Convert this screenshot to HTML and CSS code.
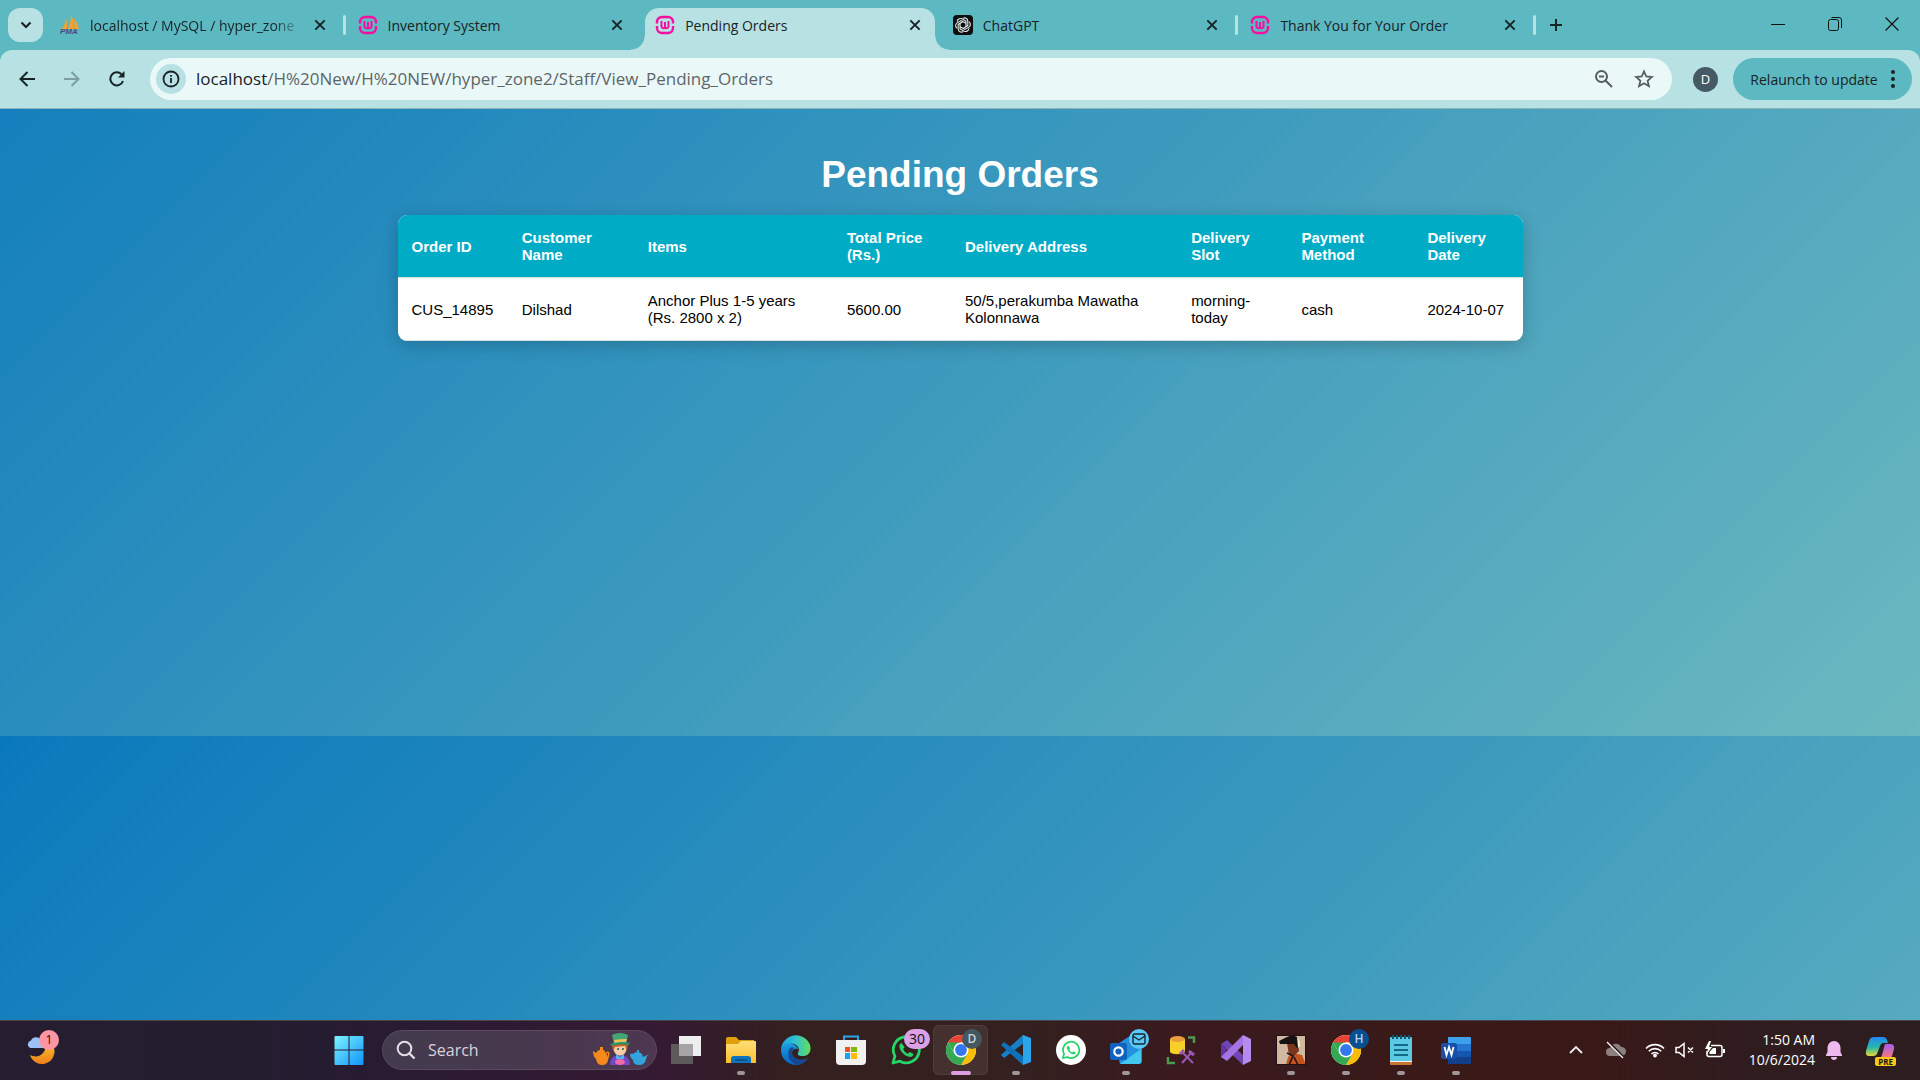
FILE: index.html
```html
<!DOCTYPE html>
<html lang="en">
<head>
<meta charset="utf-8">
<title>Pending Orders</title>
<link rel="stylesheet" href="styles.css">
</head>
<body>
<svg class="defs" aria-hidden="true">
  <defs>
    <linearGradient id="winGrad" x1="0" y1="0" x2="1" y2="1"><stop offset="0" stop-color="#7df3ff"/><stop offset="1" stop-color="#0f93fb"/></linearGradient>
    <linearGradient id="moonGrad" x1="0" y1="0" x2="0" y2="1"><stop offset="0" stop-color="#f5b52a"/><stop offset="1" stop-color="#f0801a"/></linearGradient>
    <linearGradient id="folderGrad" x1="0" y1="0" x2="0" y2="1"><stop offset="0" stop-color="#ffe07a"/><stop offset="1" stop-color="#fdbf2c"/></linearGradient>
    <linearGradient id="edgeTop" x1="0" y1="0" x2="1" y2="0"><stop offset="0" stop-color="#1f9fe0"/><stop offset=".5" stop-color="#2fc3d0"/><stop offset="1" stop-color="#66dd55"/></linearGradient>
    <linearGradient id="edgeSide" x1="0" y1="0" x2="0" y2="1"><stop offset="0" stop-color="#1b9de2"/><stop offset="1" stop-color="#0c5fc0"/></linearGradient>
    <linearGradient id="copA" x1="0" y1="0" x2="0" y2="1"><stop offset="0" stop-color="#1f86f5"/><stop offset=".55" stop-color="#28b9a8"/><stop offset="1" stop-color="#e8d838"/></linearGradient>
    <linearGradient id="copB" x1="0" y1="0" x2="0" y2="1"><stop offset="0" stop-color="#a25cf0"/><stop offset="1" stop-color="#ff7a70"/></linearGradient>
    <symbol id="wamp" viewBox="0 0 20 20">
      <g fill="none" stroke="#f70fa1" stroke-width="2.4"><path d="M2 8.500V7a5 5 0 0 1 5-5h6a5 5 0 0 1 5 5v1.500M2 11v2a5 5 0 0 0 5 5h6a5 5 0 0 0 5-5v-2"/><path d="M6.500 6v5.500a2 2 0 0 0 3.500 1 2 2 0 0 0 3.500-1V6M10 7v6" stroke-width="2"/></g>
    </symbol>
    <symbol id="cross" viewBox="0 0 12 12"><path d="M2 2l8 8M10 2l-8 8" fill="none" stroke="#182326" stroke-width="1.700"/></symbol>
    <symbol id="chrome" viewBox="0 0 32 32">
      <circle cx="16" cy="16" r="15" fill="#fff"/>
      <path d="M16 16 3 8.500A15 15 0 0 1 29 8.500H16z" fill="#ea4335"/>
      <path d="M29 8.500A15 15 0 0 1 16 31l6.500-11.250L16 8.500z" fill="#fbbc05"/>
      <path d="M3 8.500A15 15 0 0 0 16 31l6.500-11.250H9.500z" fill="#34a853"/>
      <path d="M3 8.500 9.500 19.750 16 16V8.500z" fill="#34a853"/>
      <circle cx="16" cy="16" r="7.500" fill="#fff"/><circle cx="16" cy="16" r="5.900" fill="#3478f0"/>
    </symbol>
    <symbol id="phone" viewBox="0 0 32 32">
      <path d="M3 29l1.900-6.900A13 13 0 1 1 10 27.200z" fill="none" stroke="currentColor" stroke-width="2.800" stroke-linejoin="round"/>
      <path d="M11.500 9c-1.500.3-2.500 2-2 4.200 1 4.500 5 8.600 9.500 9.600 2.300.4 4.400-.7 4.400-2.900l-3.700-2-1.700 1.900c-2.200-.9-3.900-2.600-4.900-4.800l1.600-1.700z" fill="currentColor"/>
    </symbol>
  </defs>
</svg>

<header class="browser">
  <div class="tabstrip">
    <button class="tabsearch" aria-label="Search tabs"><svg width="12" height="8" viewBox="0 0 12 8"><path d="M1.500 1.500 6 6l4.500-4.500" fill="none" stroke="#182326" stroke-width="2.200"/></svg></button>
    <nav class="tabs" aria-label="Tabs">
      <div class="tab">
        <svg class="favicon" viewBox="0 0 20 20"><path d="M1 14Q5 11 6 3q2 5 1 11zM8 14Q11 8 11 0q4 7 2 14zM14 14q1-5 0-11 4 5 5 11z" fill="#f6a12c"/><text x="0" y="19" class="pma">PMA</text></svg>
        <a href="#" class="title fade">localhost / MySQL / hyper_zone</a>
        <button class="close" aria-label="Close tab"><svg width="14" height="14"><use href="#cross"/></svg></button>
      </div>
      <div class="tab divided">
        <svg class="favicon"><use href="#wamp"/></svg>
        <a href="#" class="title">Inventory System</a>
        <button class="close" aria-label="Close tab"><svg width="14" height="14"><use href="#cross"/></svg></button>
      </div>
      <div class="tab active">
        <svg class="favicon"><use href="#wamp"/></svg>
        <a href="#" class="title">Pending Orders</a>
        <button class="close" aria-label="Close tab"><svg width="14" height="14"><use href="#cross"/></svg></button>
      </div>
      <div class="tab">
        <svg class="favicon" viewBox="0 0 20 20"><rect width="20" height="20" rx="4" fill="#0b0d0e"/><g fill="none" stroke="#e8eeee" stroke-width="1.100"><path id="petal" d="M10 3.200c2-1 4.600.2 4.800 2.800v4.600L10 13.400"/><use href="#petal" transform="rotate(60 10 10)"/><use href="#petal" transform="rotate(120 10 10)"/><use href="#petal" transform="rotate(180 10 10)"/><use href="#petal" transform="rotate(240 10 10)"/><use href="#petal" transform="rotate(300 10 10)"/></g></svg>
        <a href="#" class="title">ChatGPT</a>
        <button class="close" aria-label="Close tab"><svg width="14" height="14"><use href="#cross"/></svg></button>
      </div>
      <div class="tab divided last">
        <svg class="favicon"><use href="#wamp"/></svg>
        <a href="#" class="title">Thank You for Your Order</a>
        <button class="close" aria-label="Close tab"><svg width="14" height="14"><use href="#cross"/></svg></button>
      </div>
    </nav>
    <button class="newtab" aria-label="New tab"><svg width="14" height="14" viewBox="0 0 14 14"><path d="M7 1v12M1 7h12" stroke="#182326" stroke-width="2"/></svg></button>
    <div class="wincontrols">
      <button aria-label="Minimize"><svg width="14" height="14" viewBox="0 0 14 14"><path d="M0 7.500h14" stroke="#111"/></svg></button>
      <button aria-label="Restore"><svg width="14" height="14" viewBox="0 0 14 14"><g fill="none" stroke="#111"><rect x=".5" y="2.500" width="10" height="11" rx="2"/><path d="M3.500.5H11a2.500 2.500 0 0 1 2.500 2.500v8"/></g></svg></button>
      <button aria-label="Close"><svg width="14" height="14" viewBox="0 0 14 14"><path d="M.5.5l13 13M13.500.5l-13 13" stroke="#111" stroke-width="1.200"/></svg></button>
    </div>
  </div>
  <div class="toolbar">
    <div class="navbuttons">
      <button aria-label="Back"><svg width="16" height="16" viewBox="0 0 16 16"><path d="M16 8H1.500M8.500 1 1.500 8l7 7" fill="none" stroke="#182326" stroke-width="2"/></svg></button>
      <button aria-label="Forward"><svg width="16" height="16" viewBox="0 0 16 16"><path d="M0 8h14.500M7.500 1l7 7-7 7" fill="none" stroke="#7d9ea1" stroke-width="2"/></svg></button>
      <button aria-label="Reload"><svg width="16" height="16" viewBox="0 0 16 16"><path d="M14 10A6.500 6.500 0 1 1 12.600 3.400L14 5" fill="none" stroke="#182326" stroke-width="2"/><path d="M15.500 0v6.500H9z" fill="#182326"/></svg></button>
    </div>
    <div class="omnibox">
      <button class="siteinfo" aria-label="Site information"><svg width="18" height="18" viewBox="0 0 18 18"><circle cx="9" cy="9" r="7.500" fill="none" stroke="#182326" stroke-width="1.800"/><path d="M9 8v5M9 5v1.800" stroke="#182326" stroke-width="1.800"/></svg></button>
      <div class="url"><span class="host">localhost</span>/H%20New/H%20NEW/hyper_zone2/Staff/View_Pending_Orders</div>
      <button class="omniicon" aria-label="Zoom"><svg width="20" height="20" viewBox="0 0 20 20"><g fill="none" stroke="#555e60" stroke-width="2"><circle cx="7.500" cy="7.500" r="5.500"/><path d="M11.500 11.500l6.500 6.500M5 7.500h5"/></g></svg></button>
      <button class="omniicon" aria-label="Bookmark"><svg width="20" height="20" viewBox="0 0 20 20"><path d="M10 2.400l2.300 5.100 5.500.5-4.200 3.700 1.300 5.500-4.900-2.900-4.900 2.900 1.300-5.500L2.200 8l5.500-.5z" fill="none" stroke="#555e60" stroke-width="1.800"/></svg></button>
    </div>
    <button class="avatar" aria-label="Profile">D</button>
    <button class="relaunch">Relaunch to update<svg width="4" height="18" viewBox="0 0 4 18"><g fill="#182326"><circle cx="2" cy="2" r="2"/><circle cx="2" cy="9" r="2"/><circle cx="2" cy="16" r="2"/></g></svg></button>
  </div>
</header>

<main class="page">
  <h1>Pending Orders</h1>
  <table class="orders">
    <colgroup><col class="c-id"><col class="c-name"><col class="c-items"><col class="c-total"><col class="c-addr"><col class="c-slot"><col class="c-pay"><col class="c-date"></colgroup>
    <thead><tr><th>Order ID</th><th>Customer Name</th><th>Items</th><th>Total Price (Rs.)</th><th>Delivery Address</th><th>Delivery Slot</th><th>Payment Method</th><th>Delivery Date</th></tr></thead>
    <tbody><tr><td>CUS_14895</td><td>Dilshad</td><td>Anchor Plus 1-5 years (Rs. 2800 x 2)</td><td>5600.00</td><td>50/5,perakumba Mawatha Kolonnawa</td><td>morning-today</td><td>cash</td><td>2024-10-07</td></tr></tbody>
  </table>
</main>

<footer class="taskbar">
  <button class="weather" aria-label="Weather">
    <svg width="30" height="30" viewBox="0 0 30 30"><path d="M28 13A12.500 12.500 0 0 1 4 20c8 4 15-1 16-9z" fill="url(#moonGrad)"/><path d="M4 13a4 4 0 0 1 1-7.500 5.500 5.500 0 0 1 10 0A4 4 0 0 1 18 13z" fill="#9cc0f5"/></svg>
    <span class="badge pink">1</span>
  </button>
  <div class="apps">
    <button class="app" aria-label="Start"><svg width="30" height="30" viewBox="0 0 30 30"><path d="M1.500 1h13v13.500h-14V2a1 1 0 0 1 1-1zM15.500 1h13a1 1 0 0 1 1 1v12.500h-14zM.5 15.500h14V30h-13a1 1 0 0 1-1-1zM15.500 15.500h14V29a1 1 0 0 1-1 1h-13z" fill="url(#winGrad)"/></svg></button>
    <label class="search">
      <svg width="20" height="20" viewBox="0 0 20 20"><circle cx="8.500" cy="8.500" r="6.800" fill="none" stroke="#e4dee6" stroke-width="2"/><path d="M13.500 13.500 18.500 18.500" stroke="#e4dee6" stroke-width="2.400"/></svg>
      <input type="text" placeholder="Search" aria-label="Search">
      <svg class="hatter" width="58" height="34" viewBox="0 0 58 34">
        <path d="M7 17h5l1 2q3 3 3 7 0 6-6 6-5 0-6-6-3-3-3-8l3 2q1-2 3-3z" fill="#f58a1c"/><path d="M8 14h3v3H8z" fill="#f58a1c"/><path d="M14 20q5-3 1 7" fill="none" stroke="#f58a1c" stroke-width="1.500"/>
        <path d="M41 21q4-4 9 0l1 3 6-3q-3 2-3 5-1 6-7 6t-6-5q-3-2-3-6 3-1 3 0zM45 17h2v3h-2z" fill="#33a3dd"/>
        <path d="M18 32q0-10 10-10t10 10z" fill="#7546c8"/><path d="M24 21l4 3 4-3v5H24z" fill="#4fb3ee"/>
        <circle cx="28" cy="16" r="6.500" fill="#f8cda6"/><path d="M21 18l-1-7 16-1-1 8-2-5-10 1z" fill="#c6652b"/><path d="M18 11q10-5 20-1l-1 2q-9-2-18 1z" fill="#2a8d66"/><path d="M20 2q8-4 16 0l-2 8q-6-1-12 1z" fill="#43a676"/><path d="M22 7q6-1 13-1l-1 3q-6-1-11 1z" fill="#f2c257"/><circle cx="26" cy="16" r="1" fill="#24565f"/><circle cx="31" cy="16" r="1" fill="#24565f"/><ellipse cx="28" cy="29" rx="5" ry="3" fill="#f06aa7"/>
      </svg>
    </label>
    <button class="app" aria-label="Task view"><svg width="30" height="30" viewBox="0 0 30 30"><rect x="8" y="1" width="22" height="20" fill="#eee"/><rect x="0" y="9" width="22" height="20" fill="#5d5a5c"/><rect x="8" y="9" width="14" height="12" fill="#a6a4a6"/></svg></button>
    <button class="app running" aria-label="File Explorer"><svg width="32" height="30" viewBox="0 0 32 30"><path d="M1 4a2 2 0 0 1 2-2h8l3 3h15v5H1z" fill="#dfa00b"/><path d="M1 9h12l3-3h14a1 1 0 0 1 1 1v21H1z" fill="url(#folderGrad)"/><path d="M6 28v-4a3 3 0 0 1 3-3h14a3 3 0 0 1 3 3v4z" fill="#0e73bd"/><path d="M10 25h12" stroke="#084c80" stroke-width="1.500"/></svg></button>
    <button class="app" aria-label="Edge"><svg width="32" height="32" viewBox="0 0 32 32"><path d="M1 16a15 15 0 0 1 29-5c2 7-2 11-7 11-4 0-6-1-5-3 3-5-2-10-8-9-5 1-8 4-9 6z" fill="url(#edgeTop)"/><path d="M1 16c1-5 6-8 11-6 4 1 6 4 6 6-1-2-5-2-6 2-1 6 7 11 16 6a15 15 0 0 1-13 7A15 15 0 0 1 1 16z" fill="url(#edgeSide)"/><path d="M10 14c-4 6-1 14 7 17 5 0 9-3 11-7-8 4-16 0-16-6 0-2 1-3 2-4-1-1-3-1-4 0z" fill="#15488f"/></svg></button>
    <button class="app" aria-label="Store"><svg width="30" height="30" viewBox="0 0 30 30"><path d="M8 6V1.500h14V6" fill="none" stroke="#2aa4e8" stroke-width="2"/><path d="M0 5h30v21a4 4 0 0 1-4 4H4a4 4 0 0 1-4-4z" fill="#f1f1f2"/><path d="M9 12h5v5H9z" fill="#f04e23"/><path d="M15 12h6v5h-6z" fill="#7eba02"/><path d="M9 18h5v6H9z" fill="#1ba1ee"/><path d="M15 18h6v6h-6z" fill="#ffb903"/></svg></button>
    <button class="app green" aria-label="WhatsApp"><svg width="32" height="32"><use href="#phone"/></svg><span class="badge lilac">30</span></button>
    <button class="app current" aria-label="Chrome, profile D"><svg width="32" height="32"><use href="#chrome"/></svg><span class="badge slate">D</span></button>
    <button class="app running" aria-label="Visual Studio Code"><svg width="32" height="32" viewBox="0 0 32 32"><path d="M23 1 1 21l3 3 20-15z" fill="#1481c9"/><path d="M1 11l3-3 20 15-1 8z" fill="#0f71b8"/><path d="M23 1l8 3v24l-8 3z" fill="#2da5ee"/></svg></button>
    <button class="app green" aria-label="WhatsApp Web"><svg width="32" height="32" viewBox="0 0 32 32"><circle cx="16" cy="16" r="15" fill="#fff"/><use href="#phone" x="6" y="6" width="20" height="20"/></svg></button>
    <button class="app running" aria-label="Outlook"><svg width="32" height="30" viewBox="0 0 32 30"><path d="M6 10 20 1l12 9v16a3 3 0 0 1-3 3H10z" fill="#2690dc"/><path d="M10 29l21-15v12a3 3 0 0 1-3 3z" fill="#42c8ef"/><rect y="8" width="17" height="17" rx="2" fill="#0f62bd"/><circle cx="8.500" cy="16.500" r="4.200" fill="none" stroke="#fff" stroke-width="2.200"/></svg><span class="badge sky"><svg width="14" height="12" viewBox="0 0 14 12"><g fill="none" stroke="#14262e" stroke-width="1.400"><rect x="1" y="1" width="12" height="10" rx="1.500"/><path d="M1 3l6 4 6-4"/></g></svg></span></button>
    <button class="app" aria-label="SQL Server tools"><svg width="30" height="30" viewBox="0 0 30 30"><path d="M4 4v13c2 3 12 3 15 0V4z" fill="#f6cf29"/><ellipse cx="11.500" cy="4" rx="7.500" ry="3" fill="#eb9d3f"/><path d="M22 2.500h6V8M2 22v6h7" fill="none" stroke="#4a9b4e" stroke-width="2.500"/><path d="M16 28l9-10M17 18l10 10" stroke="#9a57b5" stroke-width="2"/><path d="M14 19l4-4M23 16l5 4" stroke="#9a57b5" stroke-width="3"/></svg></button>
    <button class="app" aria-label="Visual Studio"><svg width="32" height="32" viewBox="0 0 32 32"><path d="M1 10l6-4 18 17-2 8z" fill="#7045b5"/><path d="M1 10l5 3v8l-5 3z" fill="#6236a0"/><path d="M1 23l6 4L25 9 23 1z" fill="#a474e4"/><path d="M23 1l8 4v22l-8 4z" fill="#b68bf0"/></svg></button>
    <button class="app running" aria-label="Game"><svg width="30" height="30" viewBox="0 0 30 30"><rect width="30" height="30" fill="#d1b8a3"/><path d="M10 30l2-8 5-4 9 2 4 10z" fill="#c4521b"/><path d="M11 8h11l1 8-5 5-5-1z" fill="#7b351b"/><path d="M3 6 9 3q7-4 12-1l2 6 1 4-3 1-3-4H4z" fill="#171112"/><path d="M21 2q4 4 3 10l-2 1z" fill="#efe6c4"/><path d="M11 18l6 3-4 9M18 22l4 8" fill="none" stroke="#1f1212" stroke-width="1.500"/><rect x=".5" y=".5" width="29" height="29" fill="none" stroke="#221312"/></svg></button>
    <button class="app running" aria-label="Chrome, profile H"><svg width="32" height="32"><use href="#chrome"/></svg><span class="badge navy">H</span></button>
    <button class="app running" aria-label="Notepad"><svg width="24" height="30" viewBox="0 0 24 30"><rect x="1" y="22" width="22" height="8" rx="1" fill="#c9752d"/><rect x="1" y="22" width="22" height="5" fill="#f2f2f2"/><rect x="1" y="2" width="22" height="24" rx="1" fill="#5cc9e4"/><path d="M5 10h14M5 15h14M5 20h14" stroke="#126983" stroke-width="2"/><path d="M4 0v4M8 0v4M12 0v4M16 0v4M20 0v4" stroke="#0f5873" stroke-width="2"/></svg></button>
    <button class="app running" aria-label="Word"><svg width="30" height="28" viewBox="0 0 30 28"><path d="M7 1h22a1 1 0 0 1 1 1v6H7z" fill="#3e9fec"/><path d="M7 8h23v7H7z" fill="#2474d0"/><path d="M7 15h23v6H7z" fill="#1557b0"/><path d="M7 21h23v6a1 1 0 0 1-1 1H7z" fill="#123f8c"/><rect y="7" width="16" height="16" rx="2" fill="#174ea6"/><path d="M3.500 11l2 8 2.500-8 2.500 8 2-8" fill="none" stroke="#fff" stroke-width="1.800"/></svg></button>
  </div>
  <div class="tray">
    <button aria-label="Show hidden icons" class="t-up"><svg width="14" height="9" viewBox="0 0 14 9"><path d="M1 8l6-6 6 6" fill="none" stroke="#eee" stroke-width="1.800"/></svg></button>
    <button aria-label="OneDrive" class="t-cloud"><svg width="22" height="18" viewBox="0 0 22 18"><path d="M5 15a4 4 0 0 1 0-8A6 6 0 0 1 16 6a4.500 4.500 0 0 1 1 9z" fill="#8b8180"/><path d="M2 0l17 17" stroke="#32191a" stroke-width="3"/><path d="M2 1l16 16" stroke="#fff" stroke-width="1.300"/></svg></button>
    <button aria-label="Network, volume and battery" class="t-status">
      <svg width="20" height="16" viewBox="0 0 20 16"><g fill="none" stroke="#fff" stroke-width="1.600"><path d="M1 6.500a12.500 12.500 0 0 1 18 0M3.800 9.300a8.500 8.500 0 0 1 12.400 0M6.500 12a5 5 0 0 1 7 0"/></g><circle cx="10" cy="13.500" r="1.900" fill="#fff"/></svg>
      <svg width="20" height="16" viewBox="0 0 20 16"><path d="M1 5.500h3L9 1.500v13l-5-4H1zM13 5.500l5 5M18 5.500l-5 5" fill="none" stroke="#fff" stroke-width="1.500"/></svg>
      <svg width="20" height="18" viewBox="0 0 20 18"><path d="M6 4.500h9a2 2 0 0 1 2 2v7a2 2 0 0 1-2 2H4a2 2 0 0 1-2-2V10" fill="none" stroke="#fff" stroke-width="1.500"/><path d="M8 7h3v6H4.500v-2z" fill="#fff"/><path d="M18 8h2v4h-2zM4 0 0 8h3L1 14l6-8H4l2-6z" fill="#fff"/></svg>
    </button>
    <button class="clock"><span>1:50 AM</span><span>10/6/2024</span></button>
    <button aria-label="Notifications" class="t-bell"><svg width="18" height="20" viewBox="0 0 18 20"><path d="M9 1a6.500 6.500 0 0 1 6.500 6.500V12l1.500 3v1H1v-1l1.500-3V7.500A6.500 6.500 0 0 1 9 1zM6 17h6a3 3 0 0 1-6 0z" fill="#efb9f0"/></svg></button>
    <button aria-label="Copilot" class="t-copilot"><svg width="30" height="30" viewBox="0 0 30 30"><path d="M9 2h9a4 4 0 0 1 4 3l1 3h-5q-2 0-3 3l-3 8q-1 2-4 2H4q-4 0-3-5L4 6q1-4 5-4z" fill="url(#copA)"/><path d="M20 9h5q5 0 4 5l-2 7q-1 3-5 3h-8q2-1 3-4z" fill="url(#copB)"/></svg><span class="pre">PRE</span></button>
  </div>
</footer>
</body>
</html>
```
FILE: styles.css
```css
* { box-sizing: border-box; }

body {
  margin: 0;
  min-height: 100vh;
  display: flex;
  flex-direction: column;
  font-family: "Open Sans", "Noto Sans", sans-serif;
  color: #182326;
}

button {
  border: 0;
  padding: 0;
  background: none;
  font: inherit;
  color: inherit;
  display: flex;
  align-items: center;
  justify-content: center;
  flex: none;
}

svg { display: block; flex: none; }
.defs { position: absolute; width: 0; height: 0; }

/* Browser chrome */
.browser { background: #5cb8c1; }

.tabstrip { display: flex; height: 50px; align-items: flex-start; }

.tabsearch {
  width: 35px;
  height: 34px;
  margin: 8px 4px 0 8px;
  border-radius: 12px;
  background: #b8e1e4;
}

.tabs { display: flex; flex: 0 1 1488px; min-width: 0; }

.tab {
  flex: 1 1 0;
  min-width: 0;
  height: 42px;
  margin-top: 8px;
  padding: 0 18px 8px 13px;
  display: flex;
  align-items: center;
  gap: 10px;
  position: relative;
}

.favicon { width: 20px; height: 20px; }
.pma { font: italic bold 8px "Liberation Sans", sans-serif; fill: #4a4a80; }

.title {
  flex: 1;
  min-width: 0;
  padding-top: 2px;
  overflow: hidden;
  white-space: nowrap;
  font-size: 14px;
  line-height: 20px;
  color: inherit;
  text-decoration: none;
}

.fade {
  -webkit-mask-image: linear-gradient(90deg, #000 86%, transparent);
  mask-image: linear-gradient(90deg, #000 86%, transparent);
}

.divided::before,
.last::after {
  content: "";
  position: absolute;
  left: -2px;
  top: 7px;
  width: 3px;
  height: 20px;
  border-radius: 2px;
  background: #b8e1e4;
}
.last::after { left: auto; right: -1px; }

.active::before {
  content: "";
  position: absolute;
  inset: 0 5px 0 3px;
  border-radius: 14px 14px 0 0;
  background: #b8e1e4;
}
.active::after {
  content: "";
  position: absolute;
  left: -11px;
  right: -9px;
  bottom: 0;
  height: 14px;
  background:
    radial-gradient(circle at 0 0, transparent 13px, #b8e1e4 14px) left / 14px 14px no-repeat,
    radial-gradient(circle at 100% 0, transparent 13px, #b8e1e4 14px) right / 14px 14px no-repeat;
}
.active > * { position: relative; z-index: 1; }

.newtab { width: 28px; height: 34px; margin: 8px 0 0 7px; }

.wincontrols { display: flex; margin-left: auto; }
.wincontrols button { width: 57px; height: 48px; }

.toolbar {
  height: 59px;
  padding: 0 8px 0 7px;
  display: flex;
  align-items: center;
  background: #b8e1e4;
  border-radius: 12px 12px 0 0;
  border-bottom: 1px solid #8db5b9;
}

.navbuttons { display: flex; gap: 5px; margin-right: 13px; }
.navbuttons button { width: 40px; height: 40px; }

.omnibox {
  flex: 1;
  min-width: 0;
  height: 42px;
  padding: 0 18px 0 6px;
  display: flex;
  align-items: center;
  border-radius: 21px;
  background: #ebf8f8;
}
.siteinfo { width: 30px; height: 30px; border-radius: 50%; background: #b8e1e4; }
.url {
  flex: 1;
  min-width: 0;
  margin-left: 10px;
  overflow: hidden;
  white-space: nowrap;
  font-size: 17px;
  line-height: 24px;
  color: #5c6668;
}
.host { color: #182326; }
.omniicon { width: 20px; height: 30px; margin-left: 20px; }

.avatar {
  width: 25px;
  height: 25px;
  margin: 0 15px 0 21px;
  border-radius: 50%;
  background: #465a66;
  color: #fff;
  font-size: 13px;
}
.relaunch {
  height: 42px;
  width: 179px;
  gap: 13px;
  border-radius: 21px;
  background: #5cb8c1;
  font-size: 14px;
  white-space: nowrap;
}

/* Orders page */
.page {
  flex: 1;
  padding: 44px 20px 20px;
  background: linear-gradient(135deg, #0a79bc, #6bb8bf) 0 -284px / 100% 100%;
  font-family: "Liberation Sans", Arial, sans-serif;
}
h1 {
  margin: 0 0 18px;
  text-align: center;
  color: #fff;
  font-size: 37px;
  line-height: 44px;
}
.orders {
  width: 100%;
  max-width: 1125px;
  margin: 0 auto;
  table-layout: fixed;
  border-collapse: separate;
  border-spacing: 0;
  overflow: hidden;
  border-radius: 9px;
  background: #fff;
  box-shadow: 0 4px 18px rgba(0, 0, 0, .2);
  font-size: 15px;
  line-height: 17px;
  color: #000;
}
.orders th,
.orders td {
  padding: 14px;
  text-align: left;
  vertical-align: middle;
  border-bottom: 1px solid #ddd;
}
.orders th { background: #00acc5; color: #fff; }
.c-id { width: 9.8%; }
.c-name { width: 11.2%; }
.c-items { width: 17.7%; }
.c-total { width: 10.5%; }
.c-addr { width: 20.1%; }
.c-slot { width: 9.8%; }
.c-pay { width: 11.2%; }
.c-date { width: 9.7%; }

/* Taskbar */
.taskbar {
  height: 60px;
  padding-bottom: 2px;
  display: flex;
  align-items: center;
  border-top: 1px solid #4a4349;
  background: linear-gradient(90deg, #261e30 0, #231d2f 12%, #281b32 20%, #351a33 34%, #33201f 41%, #33201f 53%, #3a1a1f 61%, #391a18 75%, #391917 83%, #301c1e 90%, #2c1d20 100%);
  color: #fff;
}
.weather { position: relative; margin-left: 24px; width: 34px; height: 46px; }

.apps {
  display: flex;
  align-items: center;
  margin-left: 263px;
}
.app { width: 55px; height: 50px; position: relative; }
.app:first-child { margin-right: 6px; }
.running::after,
.current::after {
  content: "";
  position: absolute;
  bottom: 0;
  width: 8px;
  height: 4px;
  border-radius: 2px;
  background: #a09598;
}
.current::after { width: 20px; background: #dd9fe4; }
.current { background: #43302f; border-radius: 6px; box-shadow: inset 0 0 0 1px #4e3c3c; }
.green { color: #25d366; }

.search {
  width: 275px;
  height: 40px;
  padding: 0 6px 0 13px;
  margin-right: 1px;
  display: flex;
  align-items: center;
  gap: 12px;
  border-radius: 20px;
  border: 1px solid #5b4960;
  background: linear-gradient(90deg, #433b4e, #4e3750);
}
.search input {
  flex: 1;
  min-width: 0;
  border: 0;
  padding: 0;
  background: none;
  outline: 0;
  font: 16px/20px "Open Sans", "Noto Sans", sans-serif;
  color: #fff;
}
.search input::placeholder { color: #d9d2dc; opacity: 1; }

.badge {
  position: absolute;
  top: 4px;
  right: 4px;
  min-width: 20px;
  height: 20px;
  border-radius: 10px;
  display: flex;
  align-items: center;
  justify-content: center;
  font-size: 12px;
  line-height: 20px;
  color: #111;
}
.pink { background: #fd96a2; right: -1px; top: 3px; }
.lilac { background: #dba0e6; width: 26px; right: 3px; font-size: 14px; }
.slate { background: #46585f; color: #c8d2d6; right: 6px; font-weight: 600; }
.navy { background: #064f91; color: #b8d4ee; font-weight: 600; }
.sky { background: #5bc8fa; }

.tray { margin-left: auto; display: flex; align-items: center; }
.t-up { width: 40px; height: 40px; margin-right: 8px; }
.t-cloud { width: 24px; height: 40px; margin-right: 17px; }
.t-status { height: 40px; gap: 10px; }
.clock {
  flex-direction: column;
  align-items: flex-end;
  margin: 0 9px 0 24px;
  font-size: 14px;
  line-height: 20px;
}
.t-bell { width: 20px; height: 40px; margin-right: 20px; }
.t-copilot { width: 32px; height: 36px; margin-right: 24px; position: relative; }
.pre {
  position: absolute;
  right: 0;
  bottom: 2px;
  padding: 0 3px;
  border-radius: 2px;
  background: #fcc616;
  color: #1c1608;
  font-size: 8px;
  line-height: 9px;
  font-weight: 700;
}
```
